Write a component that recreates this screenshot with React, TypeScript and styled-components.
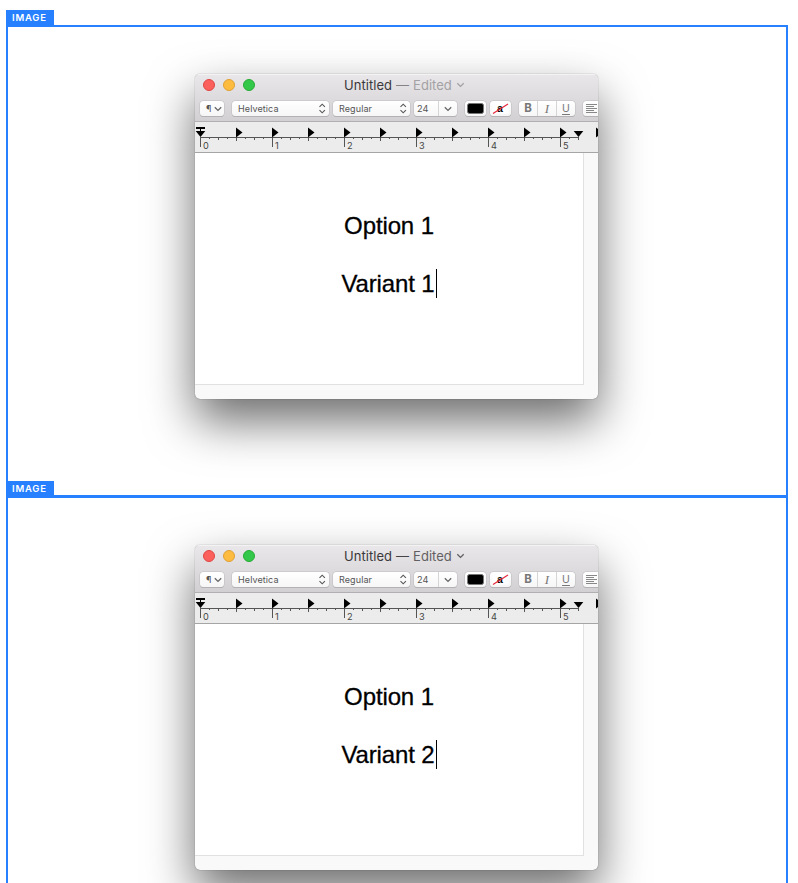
import React from "react";
import styled, { createGlobalStyle } from "styled-components";

const Global = createGlobalStyle`
  * { box-sizing: border-box; }
  html { overflow: hidden; }
  body { margin: 0; background: #fff; font-family: Inter, "Liberation Sans", sans-serif; }
`;

const Page = styled.main`
  height: 883px;
  overflow: hidden;
  padding: 10px 10px 0 6px;
`;

const Card = styled.section`
  height: 471px;
`;

const Tag = styled.div`
  width: 48px;
  height: 15px;
  padding-left: 6px;
  background: #2680ff;
  color: #fff;
  font-size: 9.5px;
  font-weight: 600;
  line-height: 15px;
  letter-spacing: 0.8px;
  white-space: nowrap;
`;

const Frame = styled.div`
  width: 782px;
  height: 472px;
  border: 2px solid #2680ff;
  padding: 47px 0 0 187px;
`;

const Window = styled.div`
  width: 403px;
  height: 325px;
  border-radius: 5px;
  overflow: hidden;
  background: #f9f9f9;
  box-shadow: 0 0 1px rgba(0, 0, 0, 0.6), 0 22px 48px rgba(0, 0, 0, 0.58);
`;

const Chrome = styled.header`
  height: 48px;
  background: linear-gradient(#e9e7e9, #d2d0d2);
  border-bottom: 1px solid #b1afb1;
  box-shadow: inset 0 1px 0 #f4f3f4;
`;

const TitleBar = styled.div`
  display: grid;
  grid-template-columns: 141px auto 1fr;
  height: 22px;
  padding-left: 8px;
  align-items: center;
`;

const Lights = styled.div`
  display: flex;
  gap: 8px;
`;

const Light = styled.i<{ $fill: string; $edge: string }>`
  width: 12px;
  height: 12px;
  border-radius: 50%;
  background: ${(p) => p.$fill};
  border: 1px solid ${(p) => p.$edge};
`;

const Title = styled.div<{ $dim: boolean }>`
  display: flex;
  align-items: center;
  height: 22px;
  color: #3b383b;
  font-size: 13px;
  white-space: pre;
  svg { margin-left: 4px; color: ${(p) => (p.$dim ? "#a3a1a4" : "#625f62")}; }
`;

const Name = styled.span`
  letter-spacing: 0.05px;
`;
const Dash = styled.span<{ $dim: boolean }>`
  margin: 0 4px;
  color: ${(p) => (p.$dim ? "#858386" : "#464346")};
`;
const Status = styled.span<{ $dim: boolean }>`
  color: ${(p) => (p.$dim ? "#a3a1a4" : "#625f62")};
`;

const Tools = styled.div`
  display: flex;
  height: 25px;
  padding: 5px 0 0 5px;
`;

const Control = styled.div<{ $w: number; $gap: number }>`
  flex: none;
  display: flex;
  align-items: center;
  justify-content: space-between;
  width: ${(p) => p.$w}px;
  height: 15px;
  margin-right: ${(p) => p.$gap}px;
  border-radius: 3.5px;
  background: linear-gradient(#fff, #f6f6f6);
  box-shadow: 0 0 0 0.5px #bdbbbd, 0 1px 0.5px #aaa8aa;
  color: #555;
  font-size: 9px;
  line-height: 15px;
`;

const Label = styled.span<{ $pad: number }>`
  padding-left: ${(p) => p.$pad}px;
  letter-spacing: 0.1px;
`;

const Segment = styled.span<{ $w: number; $last?: boolean }>`
  width: ${(p) => p.$w}px;
  height: 15px;
  display: flex;
  align-items: center;
  justify-content: center;
  border-right: ${(p) => (p.$last ? "0" : "1px solid #d5d5d5")};
  color: #666;
`;

const FontSize = styled(Segment)`
  justify-content: flex-start;
  padding-left: 3px;
  color: #555;
  font-size: 9.2px;
`;

const Bold = styled.b`
  color: #777;
  font-size: 11.5px;
  font-weight: 700;
`;
const Italic = styled.i`
  color: #777;
  font-family: "Liberation Serif", serif;
  font-size: 13px;
  line-height: 13px;
  padding-bottom: 1px;
`;
const Under = styled.u`
  color: #777;
  font-size: 10.5px;
  text-underline-offset: 1.5px;
  text-decoration-thickness: 1px;
`;

const Swatch = styled.div`
  width: 17px;
  height: 11px;
  margin: 0 auto;
  border: 0.5px solid #777;
  border-radius: 2.5px;
  background: #000;
`;

const Ruler = styled.div`
  height: 31px;
  background: #ececec;
  border-bottom: 1px solid #a5a5a5;
  svg { display: block; }
`;

const Paper = styled.div`
  width: 389px;
  height: 232px;
  padding-top: 58px;
  border-right: 1px solid #e1e1e1;
  border-bottom: 1px solid #e1e1e1;
  background: #fff;
`;

const Line = styled.p`
  display: flex;
  justify-content: center;
  align-items: center;
  margin: 0 0 29px;
  height: 29px;
  color: #000;
  font-family: "Liberation Sans", Arial, sans-serif;
  font-size: 24px;
  line-height: 29px;
  letter-spacing: -0.12px;
  -webkit-text-stroke: 0.3px #000;
`;

const Caret = styled.i`
  width: 1px;
  height: 29px;
  margin-left: 1px;
  background: #000;
`;

const Chevron = ({ w = 9 }: { w?: number }) => (
  <svg width={w} height="6" viewBox="0 0 8 6" fill="none" stroke="currentColor" strokeWidth="1.3">
    <path d="M0.8 1.2 4 4.4 7.2 1.2" />
  </svg>
);

const Stepper = () => (
  <svg width="12" height="11" viewBox="0 0 12 11" fill="none" stroke="#555" strokeWidth="1.1">
    <path d="M2.5 3.8 5.2 1.2 7.9 3.8M2.5 7.2 5.2 9.8 7.9 7.2" />
  </svg>
);

const NoColour = () => (
  <svg width="21" height="15">
    <rect x="2.5" y="2.5" width="16" height="10" fill="#fff" />
    <text x="7" y="10.5" fontFamily="Liberation Sans" fontSize="10.5" fontWeight="700">a</text>
    <path d="M3 12.5 18 3" stroke="#e5263b" strokeWidth="1.2" />
  </svg>
);

const Align = () => (
  <svg width="15" height="15" stroke="#888" strokeWidth="1">
    <path d="M3 3.5H14M3 5.5H11M3 7.5H14M3 9.5H11M3 11.5H14" />
  </svg>
);

const stops = [1, 2, 3, 4, 5, 6, 7, 8, 9, 10, 11];

const RulerMarks = () => (
  <svg width="403" height="30" shapeRendering="crispEdges">
    <path d="M5 15.5H384" stroke="#555" />
    {Array.from({ length: 43 }, (_, i) => (
      <rect
        key={i}
        x={5 + i * 9}
        y={15}
        width={1}
        height={i % 8 === 0 ? 10 : i % 4 === 0 ? 4 : i % 2 === 0 ? 3 : 2}
        fill="#555"
      />
    ))}
    {[0, 1, 2, 3, 4, 5].map((n) => (
      <text key={n} x={8 + n * 72} y={27} fontFamily="Inter" fontSize="9.2" fill="#444">
        {n}
      </text>
    ))}
    <g shapeRendering="geometricPrecision">
      {stops.map((n) => (
        <path key={n} d={`M${5 + n * 36} 5.5v10l6.5-5z`} />
      ))}
      <path d="M1 5H10V7H6V9H10.3L5.5 15 0.7 9H5V7H1z" />
      <path d="M378.7 9H388.3L383.5 15z" />
    </g>
  </svg>
);

function Editor({ text, dim }: { text: string; dim: boolean }) {
  return (
    <Window>
      <Chrome>
        <TitleBar>
          <Lights>
            <Light $fill="#fc605c" $edge="#df4643" />
            <Light $fill="#fdbc40" $edge="#dea034" />
            <Light $fill="#34c84a" $edge="#27aa35" />
          </Lights>
          <Title $dim={dim}>
            <Name>Untitled</Name>
            <Dash $dim={dim}>—</Dash>
            <Status $dim={dim}>Edited</Status>
            <Chevron />
          </Title>
        </TitleBar>
        <Tools>
          <Control $w={24} $gap={8}>
            <Label $pad={6}>¶</Label>
            <Segment $w={14} $last><Chevron w={8} /></Segment>
          </Control>
          <Control $w={97} $gap={4}>
            <Label $pad={6}>Helvetica</Label>
            <Stepper />
          </Control>
          <Control $w={77} $gap={4}>
            <Label $pad={6}>Regular</Label>
            <Stepper />
          </Control>
          <Control $w={43} $gap={8}>
            <FontSize $w={25}>24</FontSize>
            <Segment $w={18} $last><Chevron w={8} /></Segment>
          </Control>
          <Control $w={21} $gap={4}><Swatch /></Control>
          <Control $w={21} $gap={8}><NoColour /></Control>
          <Control $w={56} $gap={8}>
            <Segment $w={19}><Bold>B</Bold></Segment>
            <Segment $w={19}><Italic>I</Italic></Segment>
            <Segment $w={18} $last><Under>U</Under></Segment>
          </Control>
          <Control $w={24} $gap={0}><Align /></Control>
        </Tools>
      </Chrome>
      <Ruler><RulerMarks /></Ruler>
      <Paper>
        <Line>Option 1</Line>
        <Line>{text}<Caret /></Line>
      </Paper>
    </Window>
  );
}

export default function App() {
  return (
    <>
      <Global />
      <Page>
        <Card>
          <Tag>IMAGE</Tag>
          <Frame><Editor text="Variant 1" dim /></Frame>
        </Card>
        <Card>
          <Tag>IMAGE</Tag>
          <Frame><Editor text="Variant 2" dim={false} /></Frame>
        </Card>
      </Page>
    </>
  );
}
